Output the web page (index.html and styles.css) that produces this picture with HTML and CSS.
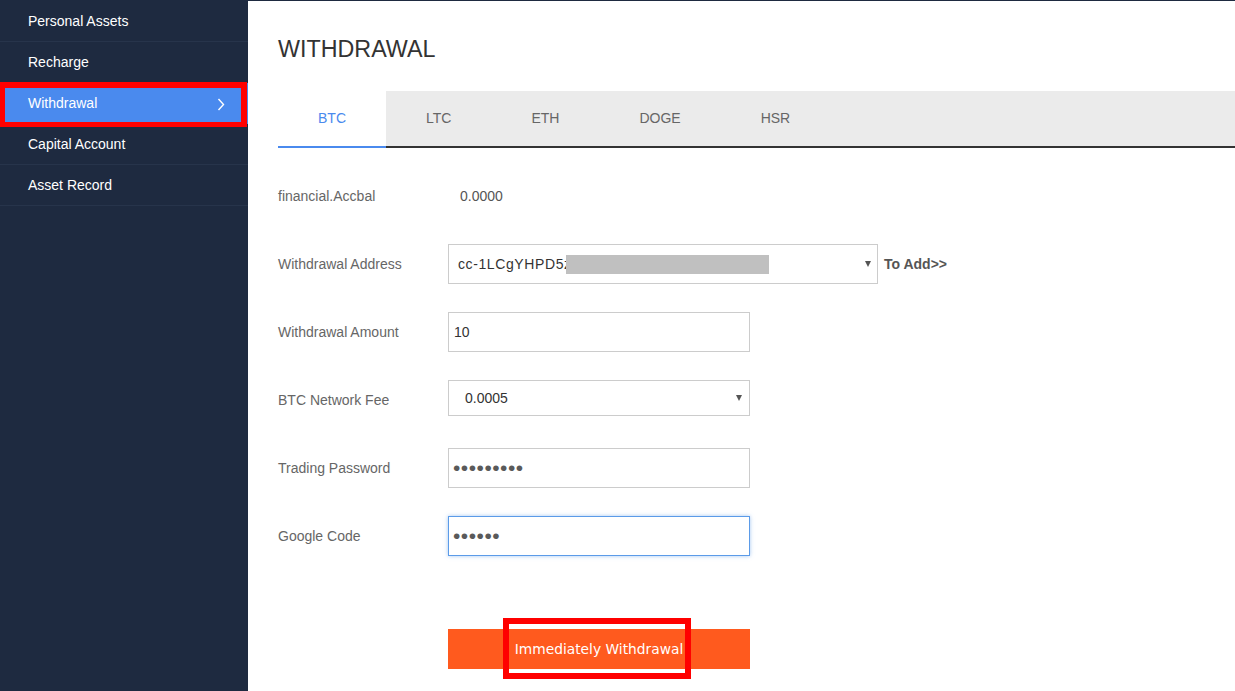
FILE: index.html
```html
<!DOCTYPE html>
<html>
<head>
<meta charset="utf-8">
<link rel="stylesheet" href="styles.css">
</head>
<body>
<aside class="sidebar">
  <ul class="nav">
    <li class="nav-item">Personal Assets</li>
    <li class="nav-item">Recharge</li>
    <li class="nav-item active">Withdrawal
      <svg class="chev" width="8" height="13" viewBox="0 0 8 13"><polyline points="1.5,1 6.5,6.5 1.5,12" fill="none" stroke="#fff" stroke-width="1.4"/></svg>
      <span class="mark mark-nav"></span>
    </li>
    <li class="nav-item">Capital Account</li>
    <li class="nav-item">Asset Record</li>
  </ul>
</aside>
<main class="main">
  <h1 class="title">WITHDRAWAL</h1>
  <div class="tabs">
    <div class="tab active">BTC</div>
    <div class="tab">LTC</div>
    <div class="tab">ETH</div>
    <div class="tab">DOGE</div>
    <div class="tab">HSR</div>
  </div>
  <div class="form">
    <div class="row">
      <div class="label">financial.Accbal</div>
      <div class="value">0.0000</div>
    </div>
    <div class="row">
      <div class="label">Withdrawal Address</div>
      <div class="field select wide"><span class="txt">cc-1LCgYHPD5z</span><span class="redact"></span><span class="caret"></span></div>
      <div class="add">To Add&gt;&gt;</div>
    </div>
    <div class="row">
      <div class="label">Withdrawal Amount</div>
      <div class="field input">10</div>
    </div>
    <div class="row">
      <div class="label">BTC Network Fee</div>
      <div class="field select short fee"><span class="txt">0.0005</span><span class="caret"></span></div>
    </div>
    <div class="row">
      <div class="label">Trading Password</div>
      <div class="field input dots">•••••••••</div>
    </div>
    <div class="row">
      <div class="label">Google Code</div>
      <div class="field input dots focus">••••••</div>
    </div>
    <div class="row btn-row">
      <div class="label"></div>
      <div class="btn-wrap">
        <button class="btn">Immediately Withdrawal</button>
        <span class="mark mark-btn"></span>
      </div>
    </div>
  </div>
</main>
</body>
</html>
```
FILE: styles.css
```css
* { box-sizing: border-box; }
html, body { margin: 0; padding: 0; }
body {
  display: flex;
  width: 1235px;
  height: 691px;
  overflow: hidden;
  font-family: "Liberation Sans", Arial, sans-serif;
  background: #fff;
}
.sidebar {
  width: 248px;
  flex: none;
  background: #1e2a40;
}
.nav { list-style: none; margin: 0; padding: 1px 0 0; }
.nav-item {
  position: relative;
  height: 41px;
  line-height: 40px;
  padding-left: 28px;
  font-size: 14px;
  color: #fff;
  border-bottom: 1px solid #27344b;
}
.nav-item.active { background: #4a8aee; border-bottom-color: #4a8aee; }
.chev { position: absolute; right: 23px; top: 15px; }
.mark { position: absolute; border: 5px solid #ff0000; pointer-events: none; }
.mark-nav { left: 0; top: -1px; width: 247px; height: 45px; border-width: 6px 6px 5px 5px; }
.main {
  flex: 1;
  border-top: 1px solid #1e2a40;
  padding-left: 30px;
}
.title {
  margin: 33px 0 0;
  font-weight: normal;
  font-size: 23.3px;
  line-height: 30px;
  color: #333;
}
.tabs {
  display: flex;
  margin-top: 27px;
  height: 57px;
  background: #ebebeb;
  border-bottom: 2px solid #333;
}
.tab {
  padding: 0 40px;
  line-height: 55px;
  font-size: 14px;
  color: #666;
}
.tab.active {
  background: #fff;
  color: #4a8aee;
  border-bottom: 2px solid #4a8aee;
  height: 57px;
}
.form { margin-top: 28px; }
.row {
  display: flex;
  align-items: flex-start;
  height: 40px;
  margin-bottom: 28px;
}
.label {
  width: 170px;
  flex: none;
  line-height: 40px;
  font-size: 14px;
  color: #666;
}
.value { line-height: 40px; font-size: 14px; color: #555; padding-left: 12px; }
.field {
  display: flex;
  align-items: center;
  border: 1px solid #ccc;
  font-size: 14px;
  color: #333;
  height: 40px;
}
.input { width: 302px; padding-left: 5px; }
.select { position: relative; }
.wide { width: 430px; padding-left: 9px; }
.short { width: 302px; height: 36px; padding-left: 16px; }
.wide .txt { letter-spacing: 0.6px; }
.redact {
  display: inline-block;
  width: 203px;
  height: 19px;
  margin-left: -6px;
  background: #c0c0c0;
}
.caret {
  margin-left: auto;
  margin-right: 6px;
  width: 0;
  height: 0;
  border-left: 3.5px solid transparent;
  border-right: 3.5px solid transparent;
  border-top: 6px solid #555;
}
.fee .caret { margin-right: 7px; }
.add {
  margin-left: 6px;
  line-height: 40px;
  font-size: 14px;
  font-weight: bold;
  color: #555;
}
.dots { font-size: 21px; letter-spacing: 0.5px; color: #5a5a5a; padding-left: 4px; }
.focus {
  border-color: #5b9be8;
  box-shadow: 0 0 4px rgba(102, 160, 233, 0.6);
}
.btn-row { margin-top: 73px; }
.btn-wrap { position: relative; }
.btn {
  display: block;
  width: 302px;
  height: 40px;
  border: none;
  background: #ff5a1e;
  color: #fff;
  font-family: "DejaVu Sans", Verdana, sans-serif;
  font-size: 13.8px;
  padding: 0;
}
.mark-btn { left: 55px; top: -11px; width: 188px; height: 61px; border-width: 6px; }
```
